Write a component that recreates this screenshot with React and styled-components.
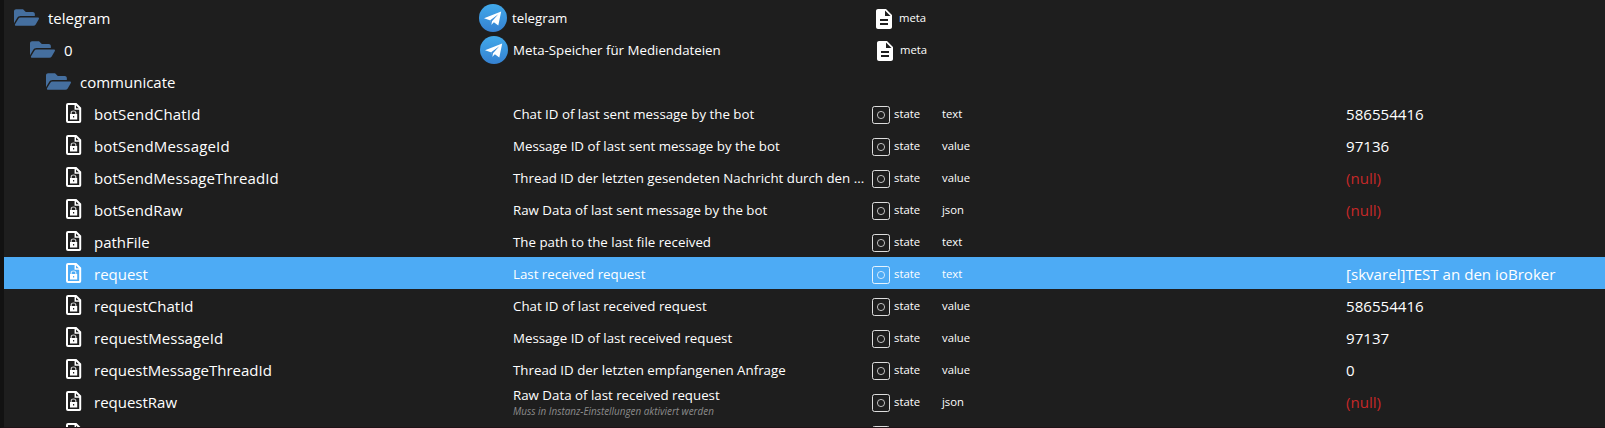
import React from 'react';
import styled, { createGlobalStyle } from 'styled-components';

const GlobalStyle = createGlobalStyle`
* {
  box-sizing: border-box;
}

body {
  margin: 0;
  background-color: #1e1e1e;
  color: #fff;
  font-family: 'Open Sans', 'Noto Sans', sans-serif;
  overflow: hidden;
}
`

const Browser = styled.div`
height: 428px;
padding-top: 1px;
border-left: 4px solid #121212;
border-bottom: 1px solid #1f1317;
overflow: hidden;
background-color: #1e1e1e;
`

const Row = styled.div`
display: grid;
grid-template-columns: 463px 401px 74px 404px 1fr;
height: 32px;
background-color: ${({ $selected }) => ($selected ? '#4dabf5' : 'transparent')};
`

const NameCell = styled.div`
display: flex;
align-items: center;
height: 32px;
padding-left: ${({ $depth }) => 10 + $depth * 16}px;
white-space: nowrap;
`

const Name = styled.span`
margin-left: ${({ $leaf }) => ($leaf ? 12 : 9)}px;
padding-top: 2px;
font-size: 15px;
line-height: 32px;
letter-spacing: ${({ $track }) => $track || 0}px;
`

const DescCell = styled.div`
display: flex;
align-items: center;
height: 32px;
padding-top: 2px;
padding-left: ${({ $icon, $shift }) => ($icon ? 12 + $shift : 46)}px;
white-space: nowrap;
`

const DescText = styled.div`
display: flex;
flex-direction: column;
margin-left: ${({ $icon }) => ($icon ? 5 : 0)}px;
`

const Title = styled.span`
font-size: 13.3px;
line-height: ${({ $hasNote }) => ($hasNote ? 18 : 30)}px;
`

const Note = styled.span`
font-size: 9.9px;
font-style: italic;
line-height: 14px;
color: #8c8c8c;
`

const TypeCell = styled.div`
display: flex;
align-items: center;
height: 32px;
padding-top: 4px;
padding-left: ${({ $shift }) => $shift}px;
`

const Small = styled.span`
font-size: 11.3px;
line-height: 26px;
height: 28px;
margin-left: ${({ $gap }) => $gap || 0}px;
`

const Role = styled(Small)`
height: 32px;
line-height: 34px;
`

const Value = styled.span`
padding-top: 1px;
font-size: 15.1px;
line-height: 32px;
white-space: nowrap;
color: ${({ $empty }) => ($empty ? '#c62828' : 'inherit')};
`

const Icon = styled.svg`
display: block;
flex-shrink: 0;
`

const FolderIcon = () => (
  <Icon width="25" height="17" viewBox="0 64 576 384" fill="#456f9f">
    <path d="M572.7 292.1 500.3 416.2A64 64 0 0 1 445 448H45c-18.500 0-30-20-20.700-36L96.700 287.800A64 64 0 0 1 152 256h400c18.500 0 30 20 20.700 36.100zM152 224h328v-48c0-26.500-21.500-48-48-48H272l-64-64H48C21.500 64 0 85.500 0 112v278l69-118.400C86.200 242.300 118 224 152 224z" />
  </Icon>
)

const FileLockIcon = () => (
  <Icon width="16" height="20" viewBox="0 0 16 20" fill="none">
    <path d="M2 1h8L14.200 5.200V18.300q0 .7-.7.700h-11.500Q1 19 1 18V2Q1 1 2 1z" stroke="#fff" strokeWidth="2" />
    <path d="M9.300 1v5H14" stroke="#fff" strokeWidth="1.500" />
    <path d="M5.200 11.500V10q0-2 2.300-2t2.300 2v1.500" stroke="#fff" strokeOpacity=".75" strokeWidth="1.200" />
    <path fillRule="evenodd" d="M4 11h7.200v5.500H4zM7 13v1.500h1.200V13z" fill="#fff" />
  </Icon>
)

const DocumentIcon = () => (
  <Icon width="24" height="24" viewBox="0 0 24 24" fill="#fff">
    <path d="M14 2H6c-1.100 0-2 .9-2 2v16c0 1.100.9 2 2 2h12c1.100 0 2-.9 2-2V8l-6-6zm2 16H8v-2h8v2zm0-4H8v-2h8v2zm-3-5V3.500L18.500 9H13z" />
  </Icon>
)

const StateIcon = () => (
  <Icon width="18" height="18" viewBox="0 0 18 18" fill="none" stroke="#fff">
    <rect x=".5" y=".5" width="17" height="17" rx="2" strokeOpacity=".85" />
    <circle cx="9" cy="9" r="3.600" strokeOpacity=".7" />
  </Icon>
)

const TelegramIcon = () => (
  <Icon width="28" height="28" viewBox="0 0 28 28">
    <defs>
      <linearGradient id="sky" x1="0" y1="0" x2="0" y2="1">
        <stop offset="0" stopColor="#41a9ea" />
        <stop offset="1" stopColor="#3581d1" />
      </linearGradient>
    </defs>
    <circle cx="14" cy="14" r="14" fill="url(#sky)" />
    <path d="M5 14.200 22.200 7.500 19.300 21.500 14.900 18.300 12.400 20.700 11.500 16.500z" fill="#fff" />
    <path d="M11.200 16.300 19.300 10.200 13 17.200 12.400 20.700z" fill="#3b8dd8" />
  </Icon>
)

const folders = [
  { name: 'telegram', depth: 0, title: 'telegram', shift: 0 },
  { name: '0', depth: 1, title: 'Meta-Speicher für Mediendateien', shift: 1 },
  { name: 'communicate', depth: 2 },
]

const states = [
  { name: 'botSendChatId', track: 0.17, title: 'Chat ID of last sent message by the bot', role: 'text', value: '586554416' },
  { name: 'botSendMessageId', track: 0.17, title: 'Message ID of last sent message by the bot', role: 'value', value: '97136' },
  { name: 'botSendMessageThreadId', track: 0.1, title: 'Thread ID der letzten gesendeten Nachricht durch den ...', role: 'value', value: '(null)' },
  { name: 'botSendRaw', track: 0.1, title: 'Raw Data of last sent message by the bot', role: 'json', value: '(null)' },
  { name: 'pathFile', title: 'The path to the last file received', role: 'text', value: '' },
  { name: 'request', title: 'Last received request', role: 'text', value: '[skvarel]TEST an den ioBroker', selected: true },
  { name: 'requestChatId', title: 'Chat ID of last received request', role: 'value', value: '586554416' },
  { name: 'requestMessageId', track: 0.05, title: 'Message ID of last received request', role: 'value', value: '97137' },
  { name: 'requestMessageThreadId', title: 'Thread ID der letzten empfangenen Anfrage', role: 'value', value: '0' },
  { name: 'requestRaw', title: 'Raw Data of last received request', note: 'Muss in Instanz-Einstellungen aktiviert werden', role: 'json', value: '(null)' },
  { name: '', title: '', role: '', value: '' },
]

const FolderRow = ({ item }) => (
  <Row>
    <NameCell $depth={item.depth}>
      <FolderIcon />
      <Name $track={item.track}>{item.name}</Name>
    </NameCell>
    <DescCell $icon={!!item.title} $shift={item.shift}>
      {item.title && <TelegramIcon />}
      <DescText $icon>
        <Title>{item.title}</Title>
      </DescText>
    </DescCell>
    <TypeCell $shift={4 + item.shift}>
      {item.title && <DocumentIcon />}
      {item.title && <Small $gap={3}>meta</Small>}
    </TypeCell>
  </Row>
)

const StateRow = ({ item }) => (
  <Row $selected={item.selected}>
    <NameCell $depth={3.25}>
      <FileLockIcon />
      <Name $leaf $track={item.track}>{item.name}</Name>
    </NameCell>
    <DescCell>
      <DescText>
        <Title $hasNote={!!item.note}>{item.title}</Title>
        {item.note && <Note>{item.note}</Note>}
      </DescText>
    </DescCell>
    <TypeCell $shift={4}>
      <StateIcon />
      {item.name && <Small $gap={4}>state</Small>}
    </TypeCell>
    <Role>{item.role}</Role>
    <Value $empty={item.value === '(null)'}>{item.value}</Value>
  </Row>
)

const App = () => {
  return (
    <>
      <GlobalStyle />
      <Browser>
        {folders.map((item) => <FolderRow key={item.name} item={item} />)}
        {states.map((item) => <StateRow key={item.name} item={item} />)}
      </Browser>
    </>
  )
}

export default App
